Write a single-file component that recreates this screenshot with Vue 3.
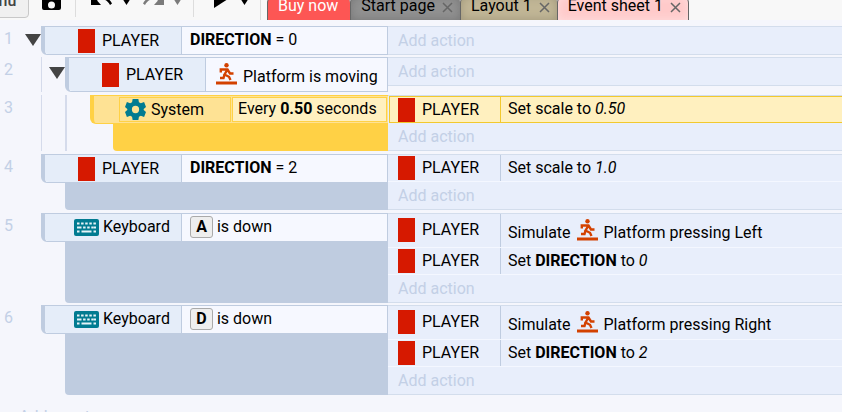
<script setup>
import { computed, ref } from 'vue'

const tabs = [
  { name: 'Start page', tone: 'grey' },
  { name: 'Layout 1', tone: 'tan' },
  { name: 'Event sheet 1', tone: 'pink' }
]

const setScale = v => ({ object: 'PLAYER', parts: [{ text: 'Set scale to ' }, { value: v }] })
const simulate = dir => ({ object: 'PLAYER', tall: true, parts: [{ text: 'Simulate ' }, { runner: true }, { text: ' Platform pressing ' + dir }] })
const setDirection = v => ({ object: 'PLAYER', parts: [{ text: 'Set ' }, { bold: 'DIRECTION' }, { text: ' to ' }, { value: v }] })

const events = [
  { id: 1, level: 0, parent: true, icon: 'sprite', object: 'PLAYER', parts: [{ bold: 'DIRECTION' }, { text: ' = 0' }], actions: [] },
  { id: 2, level: 1, parent: true, tall: true, icon: 'sprite', object: 'PLAYER', parts: [{ runner: true }, { text: ' Platform is moving' }], actions: [] },
  { id: 3, level: 2, selected: true, icon: 'gear', object: 'System', parts: [{ text: 'Every ' }, { bold: '0.50' }, { text: ' seconds' }], actions: [setScale('0.50')] },
  { id: 4, level: 0, icon: 'sprite', object: 'PLAYER', parts: [{ bold: 'DIRECTION' }, { text: ' = 2' }], actions: [setScale('1.0')] },
  { id: 5, level: 0, icon: 'keyboard', object: 'Keyboard', parts: [{ key: 'A' }, { text: ' is down' }], actions: [simulate('Left'), setDirection('0')] },
  { id: 6, level: 0, icon: 'keyboard', object: 'Keyboard', parts: [{ key: 'D' }, { text: ' is down' }], actions: [simulate('Right'), setDirection('2')] }
]

const collapsed = ref(new Set())
function toggle(id) {
  const next = new Set(collapsed.value)
  next.has(id) ? next.delete(id) : next.add(id)
  collapsed.value = next
}
const visible = computed(() => {
  let hiddenBelow = Infinity
  return events.filter(e => {
    if (e.level > hiddenBelow) return false
    hiddenBelow = collapsed.value.has(e.id) ? e.level : Infinity
    return true
  })
})
</script>

<template>
  <div class="app">
    <header class="toolbar">
      <button class="menu">Menu</button>
      <button class="tool save" aria-label="Save">
        <svg width="19" height="20" viewBox="0 0 19 20"><path fill-rule="evenodd" d="M2 0h12l5 4v14q0 2-2 2H2q-2 0-2-2V2q0-2 2-2zM3 3v4h9V3zM9.500 11.500a3.500 3.500 0 1 0 0 7 3.500 3.500 0 0 0 0-7z" /></svg>
      </button>
      <span class="rule"></span>
      <button class="tool undo" aria-label="Undo">
        <svg width="22" height="20" viewBox="0 0 22 20"><path d="M0 9v11h10l-4-4.500c5-3 10-1 13 4.500l2-1.500C17 11 9 9 3.500 13z" /></svg>
      </button>
      <button class="tool drop" aria-label="Undo history"><svg width="9" height="7" viewBox="0 0 9 7"><path d="M0 0h9L4.500 7z" /></svg></button>
      <button class="tool redo" aria-label="Redo" disabled>
        <svg width="22" height="20" viewBox="0 0 22 20"><path d="M22 9v11H12l4-4.500c-5-3-10-1-13 4.500l-2-1.500C5 11 13 9 18.500 13z" /></svg>
      </button>
      <button class="tool drop" aria-label="Redo history" disabled><svg width="9" height="7" viewBox="0 0 9 7"><path d="M0 0h9L4.500 7z" /></svg></button>
      <span class="rule middle"></span>
      <button class="tool play" aria-label="Preview"><svg width="14" height="18" viewBox="0 0 14 18"><path d="M0 0l14 9L0 18z" /></svg></button>
      <button class="tool drop" aria-label="Preview options"><svg width="9" height="7" viewBox="0 0 9 7"><path d="M0 0h9L4.500 7z" /></svg></button>
      <span class="rule last"></span>
      <nav class="tabs">
        <button class="tab buy">Buy now</button>
        <div v-for="t in tabs" :key="t.name" class="tab" :class="t.tone">
          <button class="tab-name">{{ t.name }}</button>
          <button class="close" :aria-label="'Close ' + t.name">
            <svg width="11" height="11" viewBox="0 0 11 11"><path d="M1 1l9 9M10 1l-9 9" /></svg>
          </button>
        </div>
      </nav>
    </header>

    <main class="sheet">
      <section v-for="e in visible" :key="e.id" class="event" :class="['level-' + e.level, { tall: e.tall, selected: e.selected, leaf: !e.parent, spaced: e.tall || e.actions.length === 1 }]">
        <div class="left">
          <span class="number">{{ e.id }}</span>
          <span class="guide first"></span>
          <span class="guide second"></span>
          <button v-if="e.parent" class="toggle" aria-label="Toggle sub-events" @click="toggle(e.id)">
            <svg width="16" height="12" viewBox="0 0 16 12"><path d="M0 0h16L8 12z" /></svg>
          </button>
          <div class="block">
            <div class="condition">
              <div class="object" :class="e.icon">
                <span v-if="e.icon === 'sprite'" class="sprite-box"></span>
                <svg v-else-if="e.icon === 'gear'" class="gear-icon" width="21" height="21" viewBox="0 0 22 22">
                  <path fill-rule="evenodd" d="M8 0h6l.6 3.400 2 1.100L20 3.200l2 5.200-2.400 2.100v1L22 13.600l-2 5.200-3.400-1.300-2 1.100L14 22H8l-.6-3.400-2-1.100L2 18.800l-2-5.200 2.400-2.100v-1L0 8.400l2-5.200 3.400 1.300 2-1.100zM11 7.200a3.800 3.800 0 1 0 0 7.600 3.800 3.800 0 0 0 0-7.600z" />
                </svg>
                <svg v-else class="keyboard-icon" width="25" height="17" viewBox="0 0 25 17">
                  <rect width="25" height="17" rx="2" />
                  <path d="M3 4.500h19M5 8.500h15" stroke-dasharray="2.500 1.600" />
                  <path d="M3 8.500h2M20 8.500h2M3 12.500h2.500M7.500 12.500h10M19.500 12.500h2.500" />
                </svg>
                <span>{{ e.object }}</span>
              </div>
              <div class="detail">
                <template v-for="(p, i) in e.parts" :key="i">
                  <b v-if="p.bold">{{ p.bold }}</b>
                  <kbd v-else-if="p.key">{{ p.key }}</kbd>
                  <svg v-else-if="p.runner" class="runner" width="21" height="22" viewBox="0 0 21 22">
                    <circle cx="10.500" cy="2.300" r="2.200" />
                    <path class="limb" d="M4.800 9.500V6.500h6.700l2.500 4h3.500M11.500 6.500L8.500 11.500l4.500 2.300 1.500 3.200M8.500 11.500L7.500 15H4" />
                    <path d="M0 18.500h21v3H0z" />
                  </svg>
                  <template v-else>{{ p.text }}</template>
                </template>
              </div>
            </div>
            <div class="filler"></div>
          </div>
        </div>
        <div class="actions">
          <div v-for="(a, i) in e.actions" :key="i" class="action" :class="{ 'tall-action': a.tall }">
            <div class="action-object"><span class="sprite-box"></span><span>{{ a.object }}</span></div>
            <div class="action-text">
              <template v-for="(p, j) in a.parts" :key="j">
                <b v-if="p.bold">{{ p.bold }}</b>
                <i v-else-if="p.value">{{ p.value }}</i>
                <svg v-else-if="p.runner" class="runner" width="21" height="22" viewBox="0 0 21 22">
                  <circle cx="10.500" cy="2.300" r="2.200" />
                  <path class="limb" d="M4.800 9.500V6.500h6.700l2.500 4h3.500M11.500 6.500L8.500 11.500l4.500 2.300 1.500 3.200M8.500 11.500L7.500 15H4" />
                  <path d="M0 18.500h21v3H0z" />
                </svg>
                <template v-else>{{ p.text }}</template>
              </template>
            </div>
          </div>
          <button class="add-action">Add action</button>
        </div>
      </section>
      <button class="add-event">Add event</button>
    </main>
  </div>
</template>

<style>
body {
  margin: 0;
  background: #f5f6fc;
  overflow: hidden;
}
</style>

<style scoped>
* {
  box-sizing: border-box;
}
.app {
  height: 100vh;
  overflow: hidden;
  font-family: Roboto, "Liberation Sans", sans-serif;
  font-size: 16px;
  line-height: 20px;
  color: #000;
}
button {
  font: inherit;
  color: inherit;
  border: 0;
  padding: 0;
  margin: 0;
  background: none;
  text-align: left;
}
svg {
  display: block;
  flex: none;
}

/* toolbar */
.toolbar {
  display: flex;
  align-items: flex-end;
  height: 20px;
  background: #f8f8f8;
}
.toolbar > * {
  flex: none;
}
.menu {
  width: 64px;
  height: 32px;
  margin: 0 13px 2px -35px;
  padding: 0 10px 2px;
  color: #444;
  font-weight: 500;
  background: #f0f0f0;
  border: 1px solid #c8c8c8;
  border-radius: 4px;
}
.save {
  margin: 0 14px 10px 0;
}
.rule {
  width: 1px;
  height: 30px;
  margin: 0 15px 3px 0;
  background: #ddd;
}
.rule.middle {
  margin-right: 20px;
}
.rule.last {
  margin: 0 6px 0 0;
}
.undo,
.redo {
  margin: 0 9px 15px 0;
}
.drop {
  margin: 0 11px 15px 0;
}
.play {
  margin: 0 12px 12px 0;
}
.tool:disabled {
  opacity: 0.5;
}
.tabs {
  display: flex;
  align-items: flex-end;
}
.tab {
  display: flex;
  align-items: center;
  height: 25px;
  padding: 0 7px 4px 10px;
  border: 1px solid #666;
  border-width: 1px 0 0 1px;
  border-radius: 8px 8px 0 0;
}
.tab-name {
  white-space: nowrap;
}
.buy {
  padding-right: 12px;
  color: #fff;
  background: #fd5654;
}
.grey {
  background: #919191;
  box-shadow: inset 0 0 10px #777;
}
.tan {
  background: #c1b696;
  box-shadow: inset 0 0 10px #a0977b;
}
.pink {
  background: #ffcaca;
  border-right-width: 1px;
  box-shadow: inset 0 0 10px #ffdede;
}
.close {
  margin: 2px 0 0 7px;
}
.close path {
  fill: none;
  stroke: #666;
  stroke-width: 1.5;
}

/* events */
.sheet {
  padding-top: 6px;
}
.event {
  display: grid;
  grid-template-columns: 388px minmax(0, 1fr);
  margin-bottom: 2px;
}
.spaced {
  margin-bottom: 3px;
}
.left {
  position: relative;
  display: flex;
}
.number {
  width: 13px;
  padding: 3px 0 0 4px;
  color: #c3d0e6;
}
.guide {
  display: none;
  position: absolute;
  top: 0;
  bottom: 0;
  background: #d5dbeb;
}
.first {
  left: 41px;
  width: 1px;
}
.second {
  left: 65px;
  width: 2px;
}
.level-1 .first,
.level-2 .guide {
  display: block;
}
.toggle {
  display: flex;
  align-self: flex-start;
  height: 28px;
  align-items: center;
  margin: 0 0 0 12px;
}
.toggle path {
  fill: #444;
}
.level-1 .toggle {
  height: 32px;
  margin-left: 36px;
}
.block {
  flex: 1;
  display: flex;
  flex-direction: column;
  min-width: 0;
}
.leaf .block {
  margin-left: 28px;
}
.level-2 .block {
  margin-left: 77px;
}
.condition {
  display: flex;
  height: 29px;
  border: 1px solid #bfcce0;
  border-left-width: 4px;
  border-bottom-left-radius: 6px;
  background: #f6f8ff;
}
.tall .condition {
  height: 35px;
}
.object {
  display: flex;
  flex: none;
  align-items: center;
  width: 137px;
  border-right: 1px solid #bfcce0;
  background: #e5edf9;
  border-bottom-left-radius: 4px;
}
.sprite {
  padding-left: 33px;
}
.keyboard {
  padding: 0 0 1px 29px;
  gap: 4px;
}
.sprite-box {
  flex: none;
  width: 17px;
  height: 24px;
  margin-right: 7px;
  background: #d61900;
}
.keyboard-icon rect {
  fill: #017b91;
}
.keyboard-icon path {
  fill: none;
  stroke: #e5f4f8;
  stroke-width: 2;
}
.detail {
  flex: 1;
  padding: 3px 0 0 8px;
  white-space: pre;
}
.tall .detail {
  padding-top: 5px;
}
.runner {
  display: inline-block;
  vertical-align: -3px;
  margin: 0 2px;
  fill: #d34100;
}
.limb {
  fill: none;
  stroke: #d34100;
  stroke-width: 2.4;
}
kbd {
  display: inline-block;
  width: 23px;
  height: 22px;
  font: inherit;
  font-weight: 700;
  text-align: center;
  background: #eee;
  border: 1px solid #aaa;
  border-radius: 3px;
}
.keyboard + .detail {
  padding-top: 2px;
}
.filler {
  flex: 1;
  margin-left: 24px;
  background: #bfcce0;
  border-bottom-left-radius: 4px;
}
.selected .condition {
  padding: 1px;
  background: #fee294;
  border-color: #ffd145;
  border-right-width: 0;
}
.selected .object {
  width: 112px;
  margin-left: 24px;
  padding-left: 5px;
  gap: 5px;
  border: 1px solid #ffd145;
  border-radius: 0;
  background: #fee294;
}
.selected .detail {
  margin-left: 1px;
  padding: 1px 0 0 5px;
  background: #fff0bf;
  border: 1px solid #ffd145;
}
.selected .filler {
  margin-left: 23px;
  background: #ffd145;
}
.gear-icon {
  fill: #017b91;
}

/* actions */
.actions {
  display: flex;
  flex-direction: column;
  align-self: start;
  border: 1px solid #d3ddec;
  border-width: 1px 0;
  background: #e8eefb;
}
.action {
  display: flex;
  height: 27px;
  border-bottom: 1px solid #f4f7ff;
}
.tall-action {
  height: 34px;
}
.action-object {
  display: flex;
  flex: none;
  align-items: center;
  width: 113px;
  padding-left: 10px;
  border-right: 1px solid #bfcce0;
}
.tall-action .action-object {
  padding-bottom: 2px;
}
.action-text {
  padding: 3px 0 0 7px;
  white-space: pre;
}
.tall-action .action-text {
  padding-top: 5px;
}
.selected .action {
  margin-left: 1px;
  border: 1px solid #f2c92e;
  border-right-width: 0;
  background: #fff0bf;
}
.selected .action-object {
  width: 111px;
  padding-left: 8px;
  border-color: #f2c92e;
}
.selected .action-text {
  padding-top: 2px;
}
.add-action {
  height: 27px;
  padding-left: 10px;
  color: #c3d0e6;
}
.add-event {
  margin: 10px 0 0 19px;
  color: #c3d0e6;
}
</style>
